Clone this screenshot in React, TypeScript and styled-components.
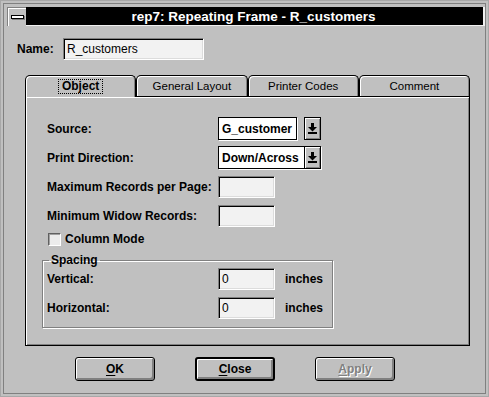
import React from "react";
import styled, { createGlobalStyle } from "styled-components";

const GlobalStyle = createGlobalStyle`
  html, body {
    margin: 0;
    padding: 0;
    background: #c0c0c0;
  }
  body {
    font-family: "Liberation Sans", Arial, sans-serif;
    font-size: 12px;
    color: #000;
  }
`;

const Window = styled.div`
  width: 489px;
  height: 397px;
  box-sizing: border-box;
  background: #c0c0c0;
  border: 1px solid #a8a8a8;
  padding: 2px;
`;

const Frame = styled.div`
  height: 100%;
  box-sizing: border-box;
  border: 1px solid #808080;
  padding-top: 3px;
  display: flex;
  flex-direction: column;
`;

const TitleBar = styled.div`
  display: flex;
  height: 19px;
  width: 478px;
  margin-left: 3px;
`;

const SysMenu = styled.div`
  width: 19px;
  height: 19px;
  box-sizing: border-box;
  background: #c0c0c0;
  border-left: 1px solid #808080;
  border-top: 1px solid #808080;
  box-shadow: inset 1px 1px 0 #fff;
  display: flex;
  align-items: center;
  justify-content: center;
`;

const SysBar = styled.div`
  width: 11px;
  height: 2px;
  background: #fff;
  border: 1px solid #000;
  box-shadow: 1px 1px 0 #808080;
`;

const Caption = styled.div`
  flex: 1;
  box-sizing: border-box;
  background: #000;
  border-right: 2px solid #f0f0f0;
  border-bottom: 1px solid #f0f0f0;
  color: #fff;
  font-weight: bold;
  font-size: 13.5px;
  display: flex;
  align-items: center;
  justify-content: center;
  padding-right: 2px;
`;

const NameRow = styled.div`
  display: flex;
  align-items: center;
  margin: 12px 0 0 13px;
  height: 22px;
`;

const Label = styled.div<{ $w?: number }>`
  width: ${(p) => (p.$w ? `${p.$w}px` : "auto")};
  flex-shrink: 0;
  font-weight: bold;
  font-size: 12px;
  white-space: nowrap;
`;

const TextBox = styled.div<{ $w: number; $bold?: boolean }>`
  width: ${(p) => p.$w}px;
  height: 22px;
  box-sizing: border-box;
  background: #f2f2f2;
  border: 1px solid;
  border-color: #808080 #fff #fff #808080;
  box-shadow: inset 1px 1px 0 #000, inset -1px -1px 0 #dcdcdc;
  padding: 0 3px;
  display: flex;
  align-items: center;
  font-size: 12px;
  font-weight: ${(p) => (p.$bold ? "bold" : "normal")};
  white-space: nowrap;
  overflow: hidden;
`;

const TabArea = styled.div`
  margin: 15px 0 0 21px;
  width: 445px;
`;

const TabStrip = styled.div`
  display: flex;
  align-items: flex-end;
  height: 21px;
`;

const Tab = styled.div<{ $active?: boolean }>`
  flex: 1;
  box-sizing: border-box;
  height: ${(p) => (p.$active ? "22px" : "21px")};
  margin-bottom: ${(p) => (p.$active ? "-1px" : "0")};
  position: relative;
  z-index: ${(p) => (p.$active ? 1 : 0)};
  background: #c0c0c0;
  border: 1px solid #000;
  border-bottom: none;
  border-radius: 5px 5px 0 0;
  box-shadow: inset 1px 1px 0 #fff, inset -1px 0 0 #808080;
  display: flex;
  align-items: center;
  justify-content: center;
  font-size: 11.5px;
  font-weight: ${(p) => (p.$active ? "bold" : "normal")};
  padding-bottom: ${(p) => (p.$active ? "1px" : "0")};
`;

const Focus = styled.span`
  border: 1px dotted #000;
  padding: 0 3px;
  line-height: 13px;
  font-size: 12px;
`;

const Panel = styled.div`
  height: 250px;
  box-sizing: border-box;
  border: 1px solid #000;
  box-shadow: inset 1px 1px 0 #fff, inset -1px -1px 0 #808080;
  padding: 20px 0 0 16px;
  display: flex;
  flex-direction: column;
`;

const FieldRow = styled.div<{ $indent?: number }>`
  display: flex;
  align-items: center;
  height: 23px;
  margin-bottom: 6px;
  padding-left: ${(p) => p.$indent ?? 5}px;
`;

const Combo = styled.div`
  display: flex;
  align-items: center;
  gap: 7px;
`;

const ComboField = styled.div<{ $w: number; $attached?: boolean }>`
  width: ${(p) => p.$w}px;
  height: 23px;
  box-sizing: border-box;
  background: #fff;
  border: 1px solid #000;
  box-shadow: 1px 1px 0 #fff;
  display: flex;
  align-items: center;
  font-weight: bold;
  font-size: 12px;
  padding-left: 3px;
  white-space: nowrap;
  overflow: hidden;
  ${(p) => (p.$attached ? "padding-right: 0; justify-content: space-between;" : "")}
`;

const ArrowBtn = styled.div<{ $attached?: boolean }>`
  width: ${(p) => (p.$attached ? 16 : 17)}px;
  height: ${(p) => (p.$attached ? 21 : 23)}px;
  box-sizing: border-box;
  flex-shrink: 0;
  background: #c0c0c0;
  border: ${(p) => (p.$attached ? "none" : "1px solid #000")};
  border-left: 1px solid #000;
  box-shadow: inset 1px 1px 0 #fff, inset -1px -1px 0 #808080;
  display: flex;
  align-items: center;
  justify-content: center;
`;

const CheckRow = styled.div`
  display: flex;
  align-items: center;
  height: 14px;
  padding-left: 6px;
  margin-top: -1px;
  gap: 4px;
`;

const CheckBox = styled.div`
  width: 13px;
  height: 13px;
  box-sizing: border-box;
  background: #ececec;
  border: 1px solid;
  border-color: #606060 #fff #fff #606060;
  box-shadow: inset 1px 1px 0 #a0a0a0;
`;

const Group = styled.fieldset`
  margin: 7px 0 0 0;
  width: 291px;
  box-sizing: border-box;
  min-width: 0;
  border: 1px solid #808080;
  box-shadow: 1px 1px 0 #fff, inset 1px 1px 0 #fff;
  padding: 0 0 2px 4px;
`;

const Legend = styled.legend`
  font-weight: bold;
  font-size: 12px;
  line-height: 14px;
  padding: 0 2px;
  margin-left: 2px;
`;

const Unit = styled.span`
  font-weight: bold;
  font-size: 12px;
  margin-left: 10px;
`;

const ButtonRow = styled.div`
  display: flex;
  gap: 40px;
  margin: 11px 0 0 71px;
`;

const Button = styled.div<{ $default?: boolean; $disabled?: boolean }>`
  width: 80px;
  height: 24px;
  box-sizing: border-box;
  background: #c0c0c0;
  border: ${(p) => (p.$default ? 2 : 1)}px solid #000;
  border-radius: 3px;
  box-shadow: inset 1px 1px 0 #fff, inset -2px -2px 0 #808080;
  display: flex;
  align-items: center;
  justify-content: center;
  font-weight: bold;
  font-size: 12px;
  color: ${(p) => (p.$disabled ? "#808080" : "#000")};
  text-shadow: ${(p) => (p.$disabled ? "1px 1px 0 #fff" : "none")};
  u {
    text-decoration-thickness: 1px;
    text-underline-offset: 2px;
  }
`;

const DownArrow = () => (
  <svg width="9" height="11" viewBox="0 0 9 11">
    <rect x="3" y="0" width="3" height="4" fill="#000" />
    <polygon points="0,4 9,4 4.5,8.5" fill="#000" />
    <rect x="0" y="9" width="9" height="2" fill="#000" />
  </svg>
);

export default function App() {
  return (
    <>
      <GlobalStyle />
      <Window>
        <Frame>
          <TitleBar>
            <SysMenu>
              <SysBar />
            </SysMenu>
            <Caption>rep7: Repeating Frame - R_customers</Caption>
          </TitleBar>

          <NameRow>
            <Label $w={46}>Name:</Label>
            <TextBox $w={141}>R_customers</TextBox>
          </NameRow>

          <TabArea>
            <TabStrip>
              <Tab $active>
                <Focus>Object</Focus>
              </Tab>
              <Tab>General Layout</Tab>
              <Tab>Printer Codes</Tab>
              <Tab>Comment</Tab>
            </TabStrip>
            <Panel>
              <FieldRow>
                <Label $w={171}>Source:</Label>
                <Combo>
                  <ComboField $w={79}>G_customer</ComboField>
                  <ArrowBtn>
                    <DownArrow />
                  </ArrowBtn>
                </Combo>
              </FieldRow>
              <FieldRow>
                <Label $w={171}>Print Direction:</Label>
                <ComboField $w={103} $attached>
                  Down/Across
                  <ArrowBtn $attached>
                    <DownArrow />
                  </ArrowBtn>
                </ComboField>
              </FieldRow>
              <FieldRow>
                <Label $w={171}>Maximum Records per Page:</Label>
                <TextBox $w={57} />
              </FieldRow>
              <FieldRow>
                <Label $w={171}>Minimum Widow Records:</Label>
                <TextBox $w={57} />
              </FieldRow>
              <CheckRow>
                <CheckBox />
                <Label>Column Mode</Label>
              </CheckRow>
              <Group>
                <Legend>Spacing</Legend>
                <FieldRow $indent={0}>
                  <Label $w={171}>Vertical:</Label>
                  <TextBox $w={57}>0</TextBox>
                  <Unit>inches</Unit>
                </FieldRow>
                <FieldRow $indent={0}>
                  <Label $w={171}>Horizontal:</Label>
                  <TextBox $w={57}>0</TextBox>
                  <Unit>inches</Unit>
                </FieldRow>
              </Group>
            </Panel>
          </TabArea>

          <ButtonRow>
            <Button>
              <span>
                <u>O</u>K
              </span>
            </Button>
            <Button $default>
              <span>
                <u>C</u>lose
              </span>
            </Button>
            <Button $disabled>
              <span>
                <u>A</u>pply
              </span>
            </Button>
          </ButtonRow>
        </Frame>
      </Window>
    </>
  );
}
